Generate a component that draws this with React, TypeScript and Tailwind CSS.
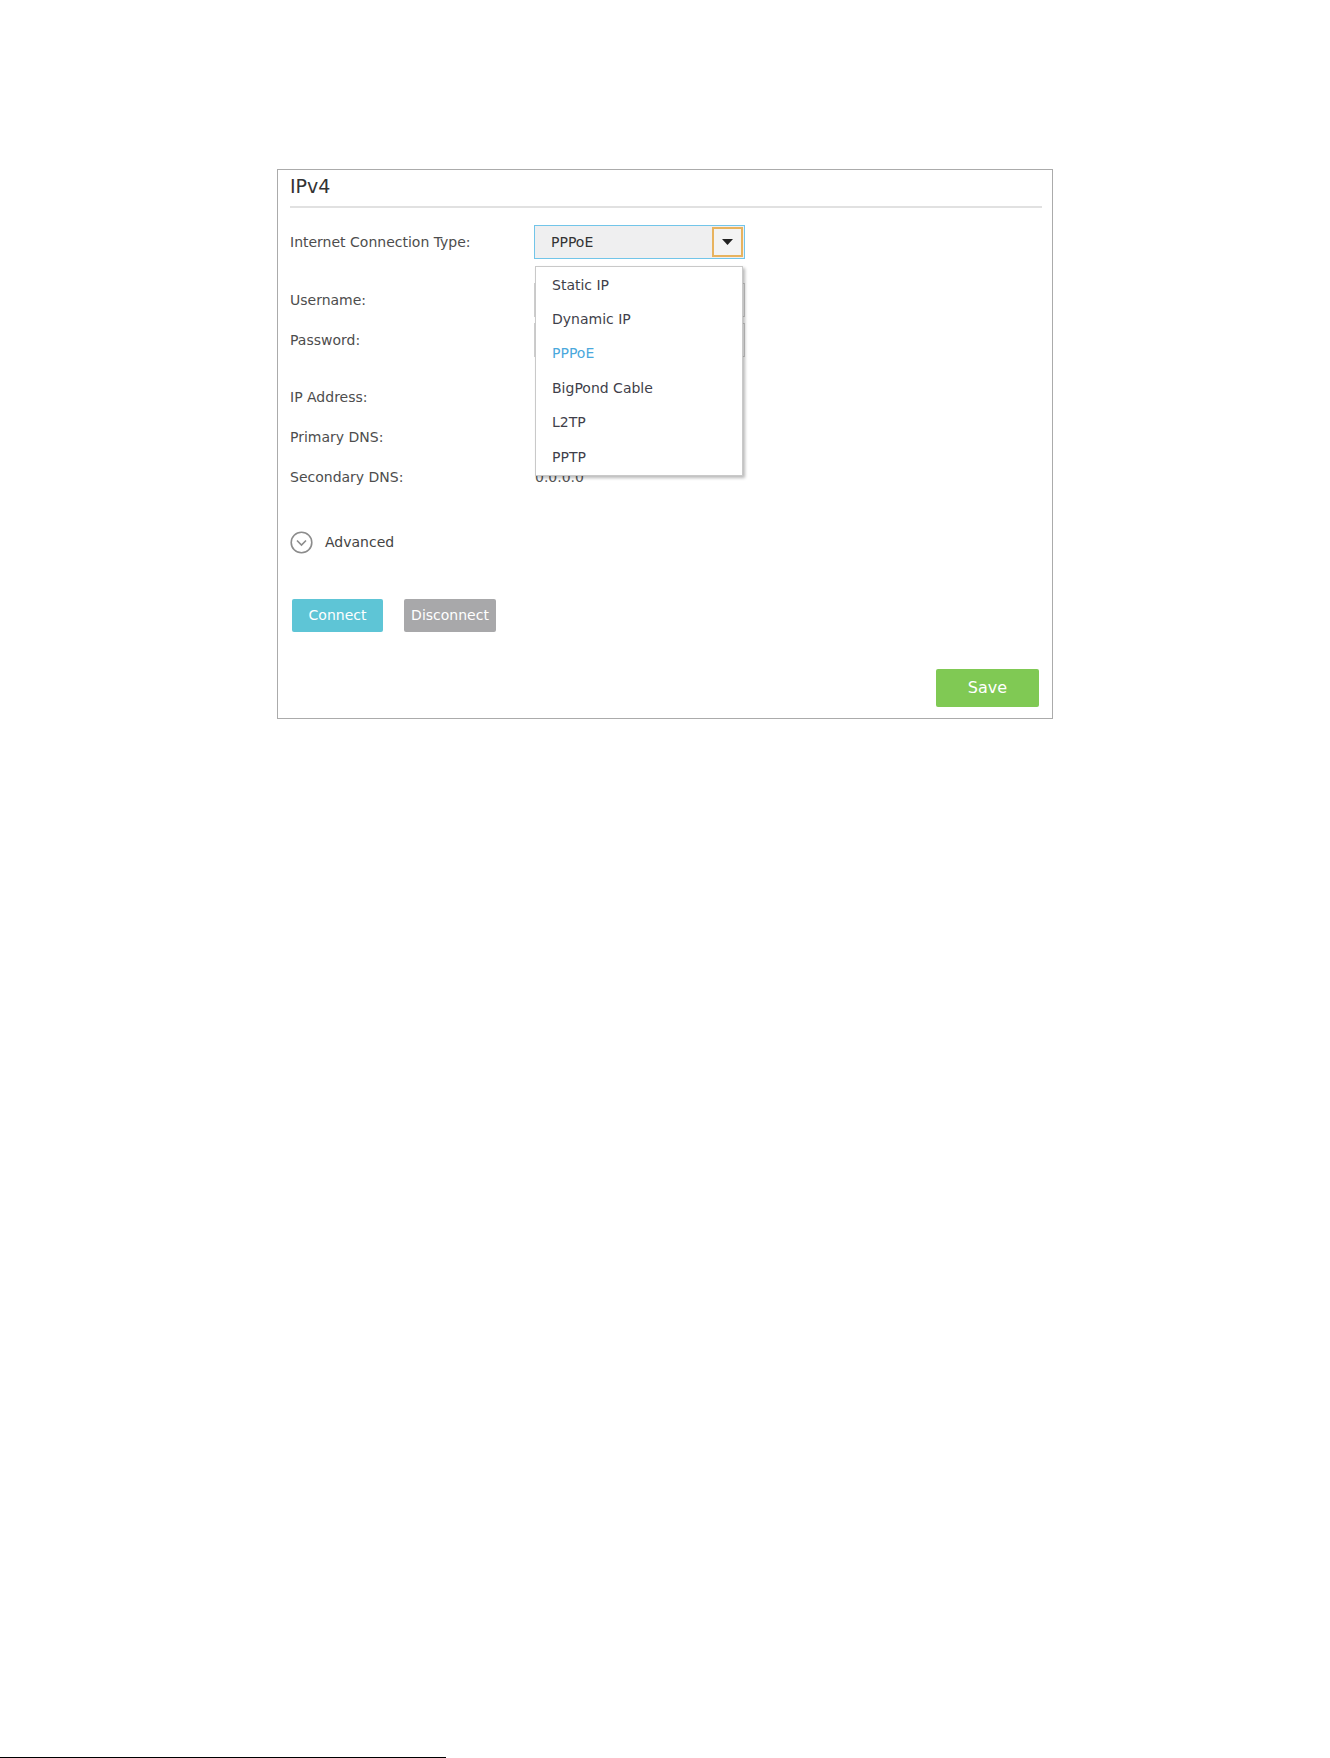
// IPv4 WAN settings panel with the connection-type list opened

const options = ["Static IP", "Dynamic IP", "PPPoE", "BigPond Cable", "L2TP", "PPTP"];

function Label({ children }: { children: React.ReactNode }) {
  return <div className="w-[244px] shrink-0 text-[14px] text-[#4d4d4d]">{children}</div>;
}

function TextBox() {
  return <div className="h-[34px] w-[211px] border border-[#cfcfcf] bg-white" />;
}

export default function App() {
  return (
    <div className="flex h-[1758px] flex-col bg-white font-['DejaVu_Sans',sans-serif]">
      <div className="ml-[277px] mt-[169px] w-[776px] border border-[#ababab] px-[12px] pb-[11px]">
        {/* heading */}
        <div className="flex h-[36px] items-center pb-[4px] text-[19px] text-[#333]">IPv4</div>
        <div className="mr-[-2px] h-[2px] bg-[#e1e1e1]" />

        {/* connection type */}
        <div className="mt-[17px] flex h-[34px] items-center">
          <Label>Internet Connection Type:</Label>
          <div className="relative z-10 flex h-[34px] w-[211px] items-center border border-[#72c5e9] bg-[#efeff0] pl-[16px] text-[14px] text-[#333]">
            PPPoE
            <div className="ml-auto mr-[1px] flex h-[30px] w-[31px] items-center justify-center border-2 border-[#e8b35e] bg-[#f3f3f3]">
              <svg width="11" height="6" viewBox="0 0 11 6">
                <path d="M0 0h11L5.5 6z" fill="#222" />
              </svg>
            </div>

            {/* open list */}
            <div className="absolute left-[0px] top-[40px] w-[208px] border border-[#c9c9c9] bg-white py-[1px] shadow-[2px_2px_3px_rgba(0,0,0,0.28)]">
              {options.map((o) => (
                <div
                  key={o}
                  className={`flex h-[34.4px] items-center pl-[16px] text-[14px] ${
                    o === "PPPoE" ? "text-[#4aa8dc]" : "text-[#3f3f4a]"
                  }`}
                >
                  {o}
                </div>
              ))}
            </div>
          </div>
        </div>

        <div className="mt-[24px] flex h-[34px] items-center">
          <Label>Username:</Label>
          <TextBox />
        </div>
        <div className="mt-[6px] flex h-[34px] items-center">
          <Label>Password:</Label>
          <TextBox />
        </div>

        {/* values for these two sit under the open list */}
        <div className="mt-[20px] flex h-[40px] items-center">
          <Label>IP Address:</Label>
        </div>
        <div className="flex h-[40px] items-center">
          <Label>Primary DNS:</Label>
        </div>
        <div className="flex h-[40px] items-center">
          <Label>Secondary DNS:</Label>
          <span className="pl-px text-[14px] text-[#555]">0.0.0.0</span>
        </div>

        {/* advanced toggle */}
        <div className="mt-[33px] flex h-[24px] items-center gap-[12px]">
          <svg width="23" height="23" viewBox="0 0 23 23">
            <circle cx="11.5" cy="11.5" r="10.3" fill="none" stroke="#8c8c8c" strokeWidth="1.6" />
            <path d="M7 9.5l4.5 4.5 4.5-4.5" fill="none" stroke="#8c8c8c" strokeWidth="1.6" />
          </svg>
          <span className="text-[14px] text-[#444]">Advanced</span>
        </div>

        <div className="mt-[45px] flex gap-[21px] pl-[2px]">
          <button className="h-[33px] w-[91px] rounded-[2px] bg-[#5ec5d6] text-[14px] text-white">Connect</button>
          <button className="h-[33px] w-[92px] rounded-[2px] bg-[#a8a8aa] text-[14px] text-white">Disconnect</button>
        </div>

        <div className="mt-[37px] flex justify-end pr-px">
          <button className="h-[38px] w-[103px] rounded-[2px] bg-[#80c954] text-[16px] text-white">Save</button>
        </div>
      </div>

      <div className="mt-auto h-px w-[446px] bg-black" />
    </div>
  );
}
